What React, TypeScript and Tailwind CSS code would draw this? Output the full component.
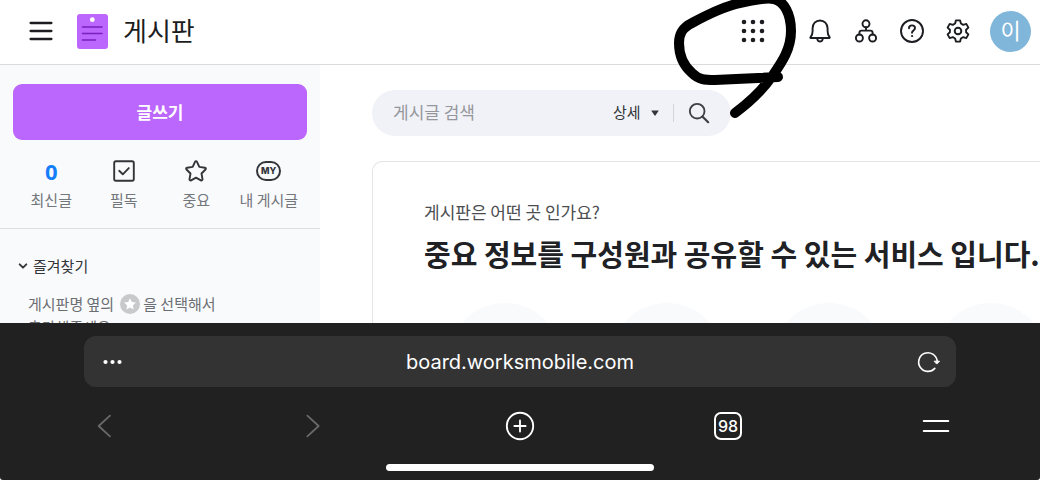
import type { ReactNode } from "react";

const shortcuts = [
  { label: "최신글", icon: <span className="font-['Noto_Sans'] text-[22px] font-bold text-[#157efb]">0</span> },
  { label: "필독", icon: <CheckIcon /> },
  { label: "중요", icon: <StarIcon /> },
  { label: "내 게시글", icon: <MyIcon /> },
];

function Icon({ children, className = "size-6" }: { children: ReactNode; className?: string }) {
  return (
    <svg
      viewBox="0 0 24 24"
      fill="none"
      stroke="currentColor"
      strokeWidth="1.9"
      strokeLinecap="round"
      strokeLinejoin="round"
      className={className}
      aria-hidden="true"
    >
      {children}
    </svg>
  );
}

function CheckIcon() {
  return (
    <Icon>
      <rect x="2.2" y="2.2" width="19.6" height="19.6" rx="1.8" />
      <path d="M7.2 11.8l3.6 3.5 6-6.2" />
    </Icon>
  );
}

function StarIcon() {
  return (
    <Icon>
      <path d="M12 2.2c.5 0 .8.3 1 .7l2.3 5 5.6.8c1 .2 1.3 1.1.6 1.8l-4 4 1 5.6c.1 1-.8 1.6-1.6 1.2L12 18.6l-4.9 2.7c-.8.4-1.7-.2-1.6-1.2l1-5.6-4-4c-.7-.7-.4-1.6.6-1.8l5.6-.8 2.3-5c.2-.4.5-.7 1-.7z" />
    </Icon>
  );
}

function MyIcon() {
  return (
    <span className="flex h-5 w-[25px] items-center justify-center rounded-full border-2 border-[#333539] font-['Inter',sans-serif] text-[9px] font-extrabold">
      MY
    </span>
  );
}

function BoardLogo() {
  return (
    <svg viewBox="0 0 31 35" className="h-[35px] w-[31px]" aria-hidden="true">
      <rect width="31" height="35" rx="3" fill="#bb66fc" />
      <circle cx="15.3" cy="5.7" r="2.4" fill="#fff" />
      <path d="M5.5 13h19.5M5.5 19.5h19.5M5.5 26h13" stroke="#7a1fc0" strokeWidth="1.6" strokeLinecap="round" />
    </svg>
  );
}

function Header() {
  return (
    <header className="flex h-[65px] shrink-0 items-center border-b border-[#d9dbde] pr-[9px] pb-[2px] pl-[29px] text-[#1c1d20]">
      <button type="button" aria-label="메뉴">
        <Icon>
          <path d="M1.6 4h20.8M1.6 12h20.8M1.6 20h20.8" strokeWidth="2.3" />
        </Icon>
      </button>
      <a href="#" className="ml-6 flex items-center gap-[15px]">
        <BoardLogo />
        <h1 className="pb-[3px] text-[26px] leading-8">게시판</h1>
      </a>

      <nav className="ml-auto flex items-center gap-[22px]">
        <button type="button" aria-label="앱 목록" className="mr-[21px]">
          <svg viewBox="0 0 24 24" fill="currentColor" className="size-6" aria-hidden="true">
            {[3, 12, 21].map((y) => [3, 12, 21].map((x) => <circle key={`${x}-${y}`} cx={x} cy={y} r="2.3" />))}
          </svg>
        </button>
        <button type="button" aria-label="알림">
          <Icon>
            <path d="M2.8 19h18.4c.6 0 .7-.5.4-.9-1.400-1.600-2-3.400-2-5.800V9.300C19.400 4.800 16.300 1.500 12 1.500S4.600 4.800 4.600 9.300v3c0 2.400-.6 4.200-2 5.800-.3.400-.4.900.2.900z" />
            <path d="M9.300 20.300c.4 1.400 1.400 2.200 2.700 2.200s2.300-.8 2.700-2.200" />
          </Icon>
        </button>
        <button type="button" aria-label="조직도">
          <Icon>
            <circle cx="12" cy="4.800" r="3.500" />
            <circle cx="5.400" cy="19" r="3.500" />
            <circle cx="18.600" cy="19" r="3.500" />
            <path d="M12 8.300v3.200M5.400 15.500v-1.700c0-1.400.8-2.200 2.200-2.200h8.800c1.400 0 2.200.8 2.200 2.200v1.700" />
          </Icon>
        </button>
        <button type="button" aria-label="도움말">
          <Icon>
            <circle cx="12" cy="12" r="11" />
            <path d="M9 9.200c0-1.700 1.300-2.800 3-2.800s3 1.100 3 2.700c0 1.300-.8 1.900-1.600 2.500-.9.600-1.400 1.100-1.400 2.200" />
            <circle cx="12" cy="17" r=".6" fill="currentColor" strokeWidth="1" />
          </Icon>
        </button>
        <button type="button" aria-label="설정">
          <Icon>
            <circle cx="12" cy="12" r="3.300" />
            <path d="M9.900 1.400h4.200l.8 3.100 2.300 1.300 3.100-.9 2.100 3.700-2.300 2.200v2.400l2.300 2.200-2.100 3.700-3.100-.9-2.300 1.300-.8 3.100H9.900l-.8-3.100-2.300-1.300-3.100.9-2.100-3.700 2.300-2.200v-2.400L1.600 8.600l2.100-3.700 3.100.9 2.300-1.300z" />
          </Icon>
        </button>
        <button type="button" className="-ml-[2px] size-[41px] rounded-full bg-[#7fb6da] pb-1 text-[22px] leading-none text-white">
          이
        </button>
      </nav>
    </header>
  );
}

function Sidebar() {
  return (
    <aside className="w-80 shrink-0 bg-[#f9fafc] pt-[19px] text-[#333539]">
      <div className="px-[13px]">
        <button type="button" className="h-14 w-full rounded-[9px] bg-[#bb66fc] text-[17px] font-bold text-white">
          글쓰기
        </button>
      </div>
      <ul className="grid grid-cols-4 border-b border-[#dcdee2] px-[15px] pt-[19px] pb-4">
        {shortcuts.map(({ label, icon }) => (
          <li key={label}>
            <a href="#" className="flex flex-col items-center gap-[5px] whitespace-nowrap">
              <span className="flex h-6 items-center">{icon}</span>
              <span className="text-[15px] leading-6 text-[#73767b]">{label}</span>
            </a>
          </li>
        ))}
      </ul>
      <section className="pt-[25px] pl-[18px]">
        <button type="button" className="flex items-center gap-[5px] text-[15px] leading-6">
          <Icon className="size-[10px]">
            <path d="M4 8l8 8 8-8" strokeWidth="4.500" />
          </Icon>
          즐겨찾기
        </button>
        <p className="mt-[14px] ml-[10px] w-50 text-[15px] leading-[23px] break-keep text-[#6b6e73]">
          게시판명 옆의
          <svg viewBox="0 0 20 20" className="mr-[3px] ml-[6px] inline size-5 align-[-4px]" role="img" aria-label="즐겨찾기">
            <circle cx="10" cy="10" r="10" fill="#c8c9cb" />
            <path d="M10 4.200l1.800 3.700 4.100.6-3 2.900.7 4.100-3.600-2-3.600 2 .7-4.100-3-2.900 4.100-.6z" fill="#fff" />
          </svg>
          을 선택해서 추가해주세요.
        </p>
      </section>
    </aside>
  );
}

function SearchBar() {
  return (
    <form className="flex h-[46px] w-[359px] items-center rounded-full bg-[#f1f2f7] px-[21px]">
      <input
        type="search"
        aria-label="게시글 검색"
        placeholder="게시글 검색"
        className="min-w-0 flex-1 bg-transparent pb-[2px] text-[17px] outline-none placeholder:text-[#95979c]"
      />
      <div className="relative">
        <select aria-label="검색 범위" className="w-[46px] appearance-none bg-transparent pb-[3px] text-[15px] text-[#333539]">
          <option>상세</option>
        </select>
        <svg viewBox="0 0 8 6" className="pointer-events-none absolute top-1/2 right-0 h-[6px] w-2 -translate-y-1/2" aria-hidden="true">
          <path d="M.8.400h6.400c.4 0 .6.400.3.700L4.400 5.400c-.2.300-.6.300-.8 0L.5 1.100C.2.800.4.400.8.400z" fill="#333539" />
        </svg>
      </div>
      <span className="mx-[14px] h-[18px] w-px bg-[#d3d5da]" />
      <button type="submit" aria-label="검색" className="text-[#3d3f44]">
        <Icon className="size-[22px]">
          <circle cx="10" cy="10" r="8" strokeWidth="2" />
          <path d="M16 16l6 6" strokeWidth="2.400" />
        </Icon>
      </button>
    </form>
  );
}

function Content() {
  return (
    <main className="min-w-0 flex-1 pt-[25px] pl-[52px]">
      <SearchBar />
      <section className="mt-[25px] h-full rounded-tl-[10px] border-t border-l border-[#e3e4e7] pt-[38px] pl-[51px]">
        <p className="text-[17px] leading-6 text-[#4a4c50]">게시판은 어떤 곳 인가요?</p>
        <h2 className="mt-[11px] text-[29px] leading-9 font-bold whitespace-nowrap text-[#202124]">
          중요 정보를 구성원과 공유할 수 있는 서비스 입니다.
        </h2>
        <div className="mt-8 ml-[25px] flex gap-[50px]">
          {[0, 1, 2, 3].map((item) => (
            <span key={item} className="size-28 shrink-0 rounded-full bg-[#f9fafc]" />
          ))}
        </div>
      </section>
    </main>
  );
}

function BrowserBar() {
  return (
    <footer className="shrink-0 rounded-b-[3px] bg-[#212121] pt-[13px] pb-[9px] text-white">
      <div className="mx-[84px] flex h-[51px] items-center rounded-xl bg-[#333] px-4">
        <button type="button" aria-label="더보기">
          <svg viewBox="0 0 24 24" fill="currentColor" className="size-6" aria-hidden="true">
            <circle cx="5.500" cy="12" r="2.100" />
            <circle cx="12.500" cy="12" r="2.100" />
            <circle cx="19.500" cy="12" r="2.100" />
          </svg>
        </button>
        <input
          type="text"
          aria-label="주소"
          defaultValue="board.worksmobile.com"
          className="min-w-0 flex-1 bg-transparent text-center font-['Inter',sans-serif] text-xl outline-none"
        />
        <button type="button" aria-label="새로고침">
          <Icon>
            <path d="M18.800 18.400a9.300 9.300 0 1 1 2.400-7.400" strokeWidth="1.600" />
            <path d="M18.500 11.200h5l-2.500 2.600z" fill="currentColor" strokeWidth="1" />
          </Icon>
        </button>
      </div>

      <nav className="mt-[23px] grid grid-cols-5 justify-items-center">
        <button type="button" aria-label="뒤로" disabled className="text-[#6a6a6a]">
          <Icon className="size-8">
            <path d="M16.500 4.200L8 12l8.500 7.800" strokeWidth="1.300" />
          </Icon>
        </button>
        <button type="button" aria-label="앞으로" disabled className="text-[#6a6a6a]">
          <Icon className="size-8">
            <path d="M8.500 4.200l8.500 7.800-8.500 7.800" strokeWidth="1.300" />
          </Icon>
        </button>
        <button type="button" aria-label="새 탭">
          <Icon className="size-8">
            <circle cx="12" cy="12" r="9.900" strokeWidth="1.400" />
            <path d="M12 7.800v8.400M7.800 12h8.400" strokeWidth="1.400" />
          </Icon>
        </button>
        <button
          type="button"
          className="my-[2px] flex size-7 items-center justify-center rounded-[7px] border-2 border-white font-['Inter',sans-serif] text-base leading-none font-medium"
        >
          98
        </button>
        <button type="button" aria-label="메뉴">
          <Icon className="size-8">
            <path d="M2.800 8.200h18.400M2.800 15.800h18.400" strokeWidth="1.500" />
          </Icon>
        </button>
      </nav>
      <div className="mx-auto mt-[22px] h-[7px] w-[268px] rounded-full bg-white" />
    </footer>
  );
}

// Hand-drawn marker loop around the app launcher
function MarkerStroke() {
  return (
    <svg
      viewBox="0 0 130 120"
      className="pointer-events-none absolute top-0 right-[240px] h-[120px] w-[130px] overflow-hidden"
      aria-hidden="true"
    >
      <path
        d="M65 113C80 102 92 91 103 75C112 62 121 49 121 31C121 14 114 1 104-1C94-3 78 1 66 4C50 8 35 16 22 23C12 28 9 34 9 43C9 55 14 66 22 73C29 80 35 80 45 80C66 79 88 78 108 77"
        fill="none"
        stroke="#000"
        strokeWidth="10"
        strokeLinecap="round"
        strokeLinejoin="round"
      />
    </svg>
  );
}

export default function App() {
  return (
    <div className="relative flex h-screen flex-col overflow-hidden bg-white font-['Noto_Sans_CJK_KR',sans-serif]">
      <Header />
      <div className="flex min-h-0 flex-1 overflow-hidden">
        <Sidebar />
        <Content />
      </div>
      <BrowserBar />
      <MarkerStroke />
    </div>
  );
}
